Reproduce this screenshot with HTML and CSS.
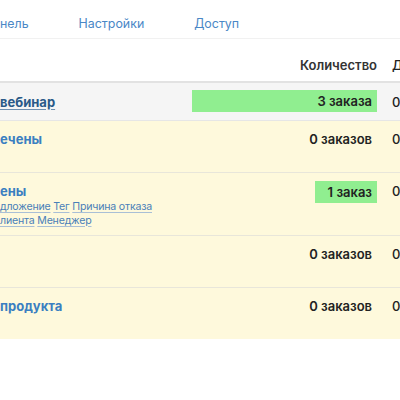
FILE: index.html
```html
<!DOCTYPE html>
<html lang="ru">
<head>
<meta charset="utf-8">
<link rel="stylesheet" href="styles.css">
</head>
<body>
<div class="page">
  <nav class="tabs">
    <a class="tab">нель</a>
    <a class="tab">Настройки</a>
    <a class="tab">Доступ</a>
  </nav>
  <div class="table">
    <div class="row head">
      <div class="c-name"></div>
      <div class="c-qty">Количество</div>
      <div class="c-next">Д</div>
    </div>
    <div class="row gray">
      <div class="c-name"><a class="name dark">вебинар</a></div>
      <div class="c-qty"><span class="bar" style="width:100%">3 заказа</span></div>
      <div class="c-next">0</div>
    </div>
    <div class="row yellow">
      <div class="c-name"><a class="name">ечены</a><div class="subs"></div></div>
      <div class="c-qty"><span class="num">0 заказов</span></div>
      <div class="c-next">0</div>
    </div>
    <div class="row yellow">
      <div class="c-name"><a class="name">ены</a>
        <div class="subs">
          <div class="subline"><a class="sub">дложение</a> <a class="sub">Тег</a> <a class="sub">Причина отказа</a></div>
          <div class="subline"><a class="sub">лиента</a> <a class="sub">Менеджер</a></div>
        </div>
      </div>
      <div class="c-qty"><span class="bar" style="width:33.3%">1 заказ</span></div>
      <div class="c-next">0</div>
    </div>
    <div class="row yellow">
      <div class="c-name"><a class="name"></a><div class="subs"></div></div>
      <div class="c-qty"><span class="num">0 заказов</span></div>
      <div class="c-next">0</div>
    </div>
    <div class="row yellow last">
      <div class="c-name"><a class="name">продукта</a><div class="subs"></div></div>
      <div class="c-qty"><span class="num">0 заказов</span></div>
      <div class="c-next">0</div>
    </div>
  </div>
</div>
</body>
</html>
```
FILE: styles.css
```css
html, body {
  margin: 0;
  padding: 0;
  background: #ffffff;
}
body {
  font-family: Inter, "Noto Sans", sans-serif;
  color: #222;
  overflow: hidden;
  width: 400px;
  height: 400px;
}
.page {
  width: 440px;
}
.tabs {
  display: flex;
  gap: 50px;
  height: 39px;
  align-items: center;
  padding-top: 9px;
  box-sizing: border-box;
  border-bottom: 1px solid #f1f1f1;
}
.tab {
  font-size: 12.4px;
  color: #4a87c6;
  line-height: 18px;
}
.table {
  display: flex;
  flex-direction: column;
}
.row {
  display: grid;
  grid-template-columns: 177px 185px 48px;
  column-gap: 15px;
  align-items: start;
  padding: 9px 0 8px;
  border-bottom: 1px solid #e8e6da;
  font-size: 13px;
  line-height: 18px;
}
.row.head {
  padding: 17px 0 7px;
  border-bottom: 2px solid #e2e2e2;
  font-weight: 500;
  color: #333;
}
.row.gray {
  background: #f5f5f5;
  padding: 8px 0 8px;
  border-bottom: 1px solid #e6e6e6;
}
.row.gray .c-name {
  padding-top: 2px;
}
.row.yellow {
  background: #fef9dc;
}
.row.last {
  border-bottom: none;
}
.c-qty {
  text-align: right;
  font-weight: 600;
}
.c-next {
  font-weight: 500;
}
.row.gray .c-next {
  padding-top: 2px;
}
.row .c-next {
  color: #222;
}
.name {
  font-weight: 700;
  color: #3b7fc1;
  display: block;
  min-height: 18px;
}
.name.dark {
  color: #2a5a88;
  text-decoration: underline;
  text-decoration-color: #6d8fb0;
  text-underline-offset: 2px;
}
.subs {
  min-height: 16px;
}
.subline {
  font-size: 10.6px;
  letter-spacing: -0.2px;
  line-height: 13.5px;
  white-space: nowrap;
}
.sub {
  color: #4a80b8;
  text-decoration: underline;
  text-decoration-color: #a9bfd6;
  text-underline-offset: 2px;
}
.num {
  display: inline-block;
  padding-right: 5px;
}
.bar {
  display: inline-block;
  box-sizing: border-box;
  background: #90ee90;
  padding: 2px 5px;
  text-align: right;
  margin-top: -1px;
}
```
